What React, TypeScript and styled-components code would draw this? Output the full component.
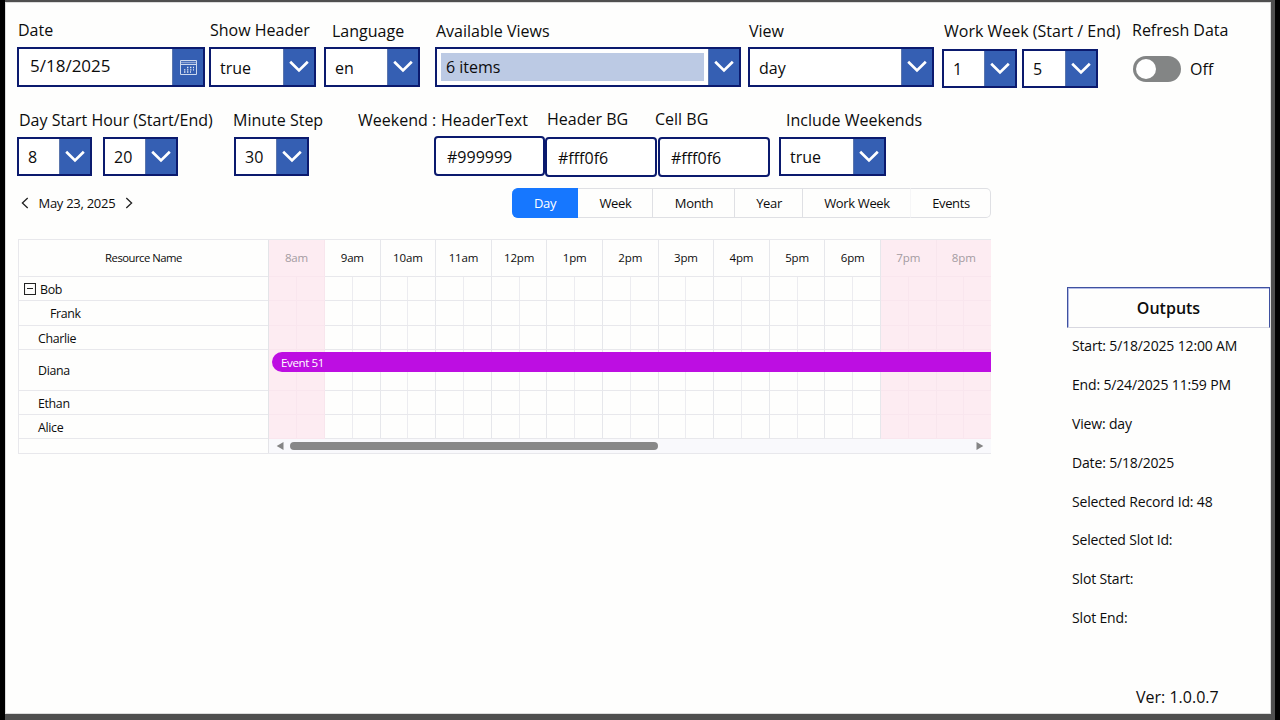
import React from "react";
import styled, { createGlobalStyle, css } from "styled-components";

const Global = createGlobalStyle`
  * { box-sizing: border-box; }
  body { margin: 0; background: #000; overflow: hidden; font-family: "Open Sans", "Noto Sans", sans-serif; color: #0c0c0c; }
`;

const Frame = styled.div`
  width: 1270px;
  height: 720px;
  margin-left: 5px;
  background: #4f4f4f;
  padding: 2px 4px 6px 0;
`;
const Page = styled.main`
  height: 712px;
  background: #fefefd;
  border: 1px solid #dcdcdc;
  display: flex;
  flex-direction: column;
`;
const FormRow = styled.section<{ $h: number; $top: number }>`
  display: flex;
  align-items: flex-start;
  height: ${(p) => p.$h}px;
  padding-top: ${(p) => p.$top}px;
  padding-left: 11px;
`;
const Field = styled.div<{ $w: number; $gap?: number }>`
  width: ${(p) => p.$w}px;
  margin-left: ${(p) => p.$gap ?? 0}px;
  flex: none;
`;
const Label = styled.label<{ $indent?: number; $drop?: number }>`
  display: block;
  height: 30px;
  line-height: 26px;
  font-size: 16px;
  white-space: nowrap;
  margin-left: ${(p) => p.$indent ?? 1}px;
  padding-top: ${(p) => p.$drop ?? 0}px;
`;
const Controls = styled.div<{ $gap?: number; $drop?: number }>`
  display: flex;
  gap: ${(p) => p.$gap ?? 0}px;
  padding-top: ${(p) => p.$drop ?? 0}px;
`;
const Box = styled.div<{ $w: number; $h?: number }>`
  display: flex;
  width: ${(p) => p.$w}px;
  height: ${(p) => p.$h ?? 40}px;
  border: 2px solid #0b1a6e;
  background: #fff;
`;
const Value = styled.span<{ $picked?: boolean; $date?: boolean }>`
  flex: 1;
  display: flex;
  align-items: center;
  padding: 1px 0 0 9px;
  font-size: 16px;
  white-space: nowrap;
  ${(p) =>
    p.$date &&
    css`
      padding: 0 0 3px 11px;
      font-size: 17px;
    `}
  ${(p) =>
    p.$picked &&
    css`
      margin: 4px 4px 4px 4px;
      padding: 0 0 0 5px;
      background: #bccae4;
    `}
`;
const DropButton = styled.span`
  width: 31px;
  flex: none;
  background: #355fb3;
  border-left: 1px solid #5b76ad;
  display: flex;
  align-items: center;
  justify-content: center;
`;
const TextBox = styled.div<{ $w: number; $h: number }>`
  width: ${(p) => p.$w}px;
  height: ${(p) => p.$h}px;
  border: 2px solid #0b1a6e;
  border-radius: 4px;
  background: #fff;
  display: flex;
  align-items: center;
  padding: 1px 0 0 11px;
  font-size: 16px;
`;
const ToggleRow = styled.div`
  display: flex;
  align-items: center;
  gap: 9px;
  height: 26px;
  margin: 9px 0 0 1px;
  font-size: 16px;
`;
const Toggle = styled.span`
  width: 48px;
  height: 26px;
  border-radius: 13px;
  background: #838585;
  padding: 3px;
  &::after {
    content: "";
    display: block;
    width: 20px;
    height: 20px;
    border-radius: 50%;
    background: #fff;
  }
`;

const Main = styled.div`
  display: flex;
  flex: 1;
  min-height: 0;
`;
const Calendar = styled.section`
  width: 973px;
  margin-left: 12px;
  flex: none;
`;
const Toolbar = styled.div`
  display: flex;
  align-items: center;
  justify-content: space-between;
  height: 30px;
`;
const DateNav = styled.div`
  display: flex;
  align-items: center;
  height: 28px;
  margin-bottom: 1px;
  padding-left: 3px;
  font-size: 13px;
  letter-spacing: -0.28px;
  gap: 9.5px;
`;
const Tabs = styled.div`
  display: flex;
  height: 30px;
`;
const Tab = styled.span<{ $w: number; $on?: boolean; $soft?: boolean }>`
  width: ${(p) => p.$w}px;
  display: flex;
  align-items: center;
  justify-content: center;
  font-size: 13px;
  letter-spacing: -0.35px;
  padding-bottom: 1px;
  padding-left: 1px;
  border: 1px solid #dfe0e4;
  border-left-width: 0;
  ${(p) => p.$soft && "border-right-color: #f6f6f7;"}
  ${(p) =>
    p.$on &&
    css`
      background: #1677ff;
      border-color: #1677ff;
      color: #fff;
    `}
  &:first-child { border-radius: 6px 0 0 6px; }
  &:last-child { border-radius: 0 5px 5px 0; }
`;
const Schedule = styled.div`
  display: flex;
  margin-top: 21px;
  height: 215px;
  border: 1px solid #e8e8ec;
  border-right: 0;
`;
const Names = styled.div`
  width: 250px;
  border-right: 1px solid #e4e4e8;
`;
const NameHead = styled.div`
  height: 37px;
  border-bottom: 1px solid #e8e8ec;
  display: flex;
  align-items: center;
  justify-content: center;
  font-size: 11.3px;
  font-weight: 500;
  letter-spacing: -0.5px;
  padding-bottom: 1px;
`;
const NameRow = styled.div<{ $h: number; $in: number }>`
  height: ${(p) => p.$h}px;
  padding-left: ${(p) => p.$in}px;
  padding-top: 1px;
  border-bottom: 1px solid #e8e8ec;
  display: flex;
  align-items: center;
  gap: 4px;
  font-size: 12.4px;
  letter-spacing: -0.35px;
`;
const Timeline = styled.div`
  flex: 1;
  min-width: 0;
`;
const SlotRow = styled.div<{ $h: number }>`
  position: relative;
  height: ${(p) => p.$h}px;
  display: grid;
  grid-template-columns: 56px repeat(11, 55.6px) minmax(0, 1fr);
`;
const Slot = styled.div<{ $off: boolean; $head?: boolean }>`
  display: flex;
  align-items: center;
  justify-content: center;
  font-size: 11.5px;
  font-weight: ${(p) => (p.$off ? 400 : 500)};
  letter-spacing: -0.15px;
  padding-bottom: ${(p) => (p.$head ? 1 : 0)}px;
  border-right: 1px solid ${(p) => (p.$off ? "#f8e6ed" : "#e6e7eb")};
  border-bottom: 1px solid ${(p) => (p.$off ? "#f9e6ee" : "#e8e8ec")};
  background: ${(p) => (p.$off ? "#fdecf2" : "transparent")};
  color: ${(p) => (p.$off ? "#a39ba1" : "#0c0c0c")};
  &:last-child { border-right: 0; }
`;
const HalfLine = styled.span<{ $off: boolean }>`
  width: 1px;
  height: 100%;
  background: ${(p) => (p.$off ? "#f9e6ee" : "#ececf0")};
`;
const EventBar = styled.div`
  position: absolute;
  left: 3px;
  right: 0;
  top: 2px;
  height: 20px;
  border-radius: 10px 0 0 10px;
  background: #bd0ee2;
  color: #fff;
  font-size: 11.6px;
  letter-spacing: -0.42px;
  line-height: 21px;
  padding-left: 9px;
`;
const Scroll = styled.div`
  height: 14px;
  background: #f9f9fc;
  display: flex;
  align-items: center;
  padding: 0 7px 1px 7px;
`;
const Thumb = styled.span`
  width: 368px;
  height: 8px;
  border-radius: 4px;
  background: #888;
  margin: 0 auto 0 6px;
`;
const Outputs = styled.aside`
  width: 204px;
  margin-left: 76px;
  margin-top: 99px;
  display: flex;
  flex-direction: column;
`;
const OutputsTitle = styled.h2`
  margin: 0;
  height: 41px;
  border: 1px solid #3f51a0;
  border-bottom-color: #d8d8e0;
  box-shadow: inset 1px 1px 0 #b4bce6;
  display: flex;
  align-items: center;
  justify-content: center;
  padding-top: 1px;
  font-size: 16px;
  font-weight: 600;
`;
const OutputLine = styled.p`
  margin: 0;
  height: 38.9px;
  line-height: 35px;
  padding-left: 5px;
  font-size: 14px;
  letter-spacing: -0.16px;
  white-space: nowrap;
`;
const Version = styled.p`
  margin: auto 0 4px;
  padding-left: 69px;
  font-size: 16px;
  line-height: 24px;
`;

const Chevron = () => (
  <svg width="20" height="14" viewBox="0 0 20 14">
    <path d="M1.2 1.8 L10 10.4 L18.8 1.8" fill="none" stroke="#fff" strokeWidth="2.7" />
  </svg>
);
const CalendarIcon = () => (
  <svg width="17" height="15" viewBox="0 0 17 15">
    <path d="M.5 .5h16v14H.5zM.5 4.5h16" fill="none" stroke="#cdd8ee" />
    <path d="M1 2.5h15" stroke="#8ba2d4" strokeWidth="1.5" />
    <path d="M7 7.5h7M4 9.8h10M4 12h7" stroke="#dfe6f4" strokeWidth="1.3" strokeDasharray="1.4 1.6" />
  </svg>
);
const Arrow = ({ next }: { next?: boolean }) => (
  <svg width="8" height="12" viewBox="0 0 8 12">
    <path d={next ? "M1.3 1 L6.6 6 L1.3 11" : "M6.7 1 L1.4 6 L6.7 11"} fill="none" stroke="#222" strokeWidth="1.3" />
  </svg>
);
const ScrollArrow = ({ next }: { next?: boolean }) => (
  <svg width="8" height="8" viewBox="0 0 8 8">
    <path d={next ? "M.5 0 L7.3 4 L.5 8z" : "M7.5 0 L.7 4 L7.5 8z"} fill="#858585" />
  </svg>
);
const Collapse = () => (
  <svg width="12" height="12" viewBox="0 0 12 12">
    <path d="M.5 .5h11v11H.5zM3 5.5h6" fill="none" stroke="#222" strokeWidth="1.1" />
  </svg>
);

type SelectProps = { w: number; h?: number; value: string; picked?: boolean };
const Select = ({ w, h, value, picked }: SelectProps) => (
  <Box $w={w} $h={h}>
    <Value $picked={picked}>{value}</Value>
    <DropButton><Chevron /></DropButton>
  </Box>
);

const hours = ["8am", "9am", "10am", "11am", "12pm", "1pm", "2pm", "3pm", "4pm", "5pm", "6pm", "7pm", "8pm"];
const isOff = (i: number) => i === 0 || i > 10;
const resources = [
  { name: "Bob", h: 24, indent: 5, group: true },
  { name: "Frank", h: 25, indent: 31 },
  { name: "Charlie", h: 24, indent: 19 },
  { name: "Diana", h: 41, indent: 19, event: "Event 51" },
  { name: "Ethan", h: 24, indent: 19 },
  { name: "Alice", h: 24, indent: 19 },
];
const tabs = [
  { name: "Day", w: 66 },
  { name: "Week", w: 75 },
  { name: "Month", w: 82 },
  { name: "Year", w: 68 },
  { name: "Work Week", w: 108 },
  { name: "Events", w: 80 },
];
const outputs = [
  "Start: 5/18/2025 12:00 AM",
  "End: 5/24/2025 11:59 PM",
  "View: day",
  "Date: 5/18/2025",
  "Selected Record Id: 48",
  "Selected Slot Id:",
  "Slot Start:",
  "Slot End:",
];

export default function App() {
  return (
    <>
      <Global />
      <Frame>
        <Page>
          <FormRow $h={90} $top={14}>
            <Field $w={188}>
              <Label>Date</Label>
              <Box $w={188}>
                <Value $date>5/18/2025</Value>
                <DropButton><CalendarIcon /></DropButton>
              </Box>
            </Field>
            <Field $w={107} $gap={4}>
              <Label>Show Header</Label>
              <Select w={107} value="true" />
            </Field>
            <Field $w={96} $gap={8}>
              <Label $indent={8} $drop={1}>Language</Label>
              <Select w={96} value="en" />
            </Field>
            <Field $w={306} $gap={15}>
              <Label $drop={1}>Available Views</Label>
              <Select w={306} value="6 items" picked />
            </Field>
            <Field $w={186} $gap={7}>
              <Label $drop={1}>View</Label>
              <Select w={186} value="day" />
            </Field>
            <Field $w={156} $gap={8}>
              <Label $indent={2} $drop={1}>Work Week (Start / End)</Label>
              <Controls $gap={5} $drop={2}>
                <Select w={75} h={39} value="1" />
                <Select w={76} h={39} value="5" />
              </Controls>
            </Field>
            <Field $w={110} $gap={34}>
              <Label $indent={0}>Refresh Data</Label>
              <ToggleRow><Toggle />Off</ToggleRow>
            </Field>
          </FormRow>
          <FormRow $h={95} $top={13}>
            <Field $w={161}>
              <Label $indent={2} $drop={1}>Day Start Hour (Start/End)</Label>
              <Controls $gap={11} $drop={1}>
                <Select w={75} h={39} value="8" />
                <Select w={75} h={39} value="20" />
              </Controls>
            </Field>
            <Field $w={75} $gap={56}>
              <Label $indent={-1} $drop={1}>Minute Step</Label>
              <Controls $drop={1}><Select w={75} h={39} value="30" /></Controls>
            </Field>
            <Field $w={76} $gap={49}>
              <Label $indent={0} $drop={1}>Weekend :</Label>
            </Field>
            <Field $w={111}>
              <Label $indent={7} $drop={1}>HeaderText</Label>
              <TextBox $w={111} $h={40}>#999999</TextBox>
            </Field>
            <Field $w={112}>
              <Label $indent={2}>Header BG</Label>
              <Controls $drop={1}><TextBox $w={112} $h={40}>#fff0f6</TextBox></Controls>
            </Field>
            <Field $w={112} $gap={1}>
              <Label $indent={-3}>Cell BG</Label>
              <Controls $drop={1}><TextBox $w={112} $h={40}>#fff0f6</TextBox></Controls>
            </Field>
            <Field $w={107} $gap={9}>
              <Label $indent={7} $drop={1}>Include Weekends</Label>
              <Controls $drop={1}><Select w={107} h={39} value="true" /></Controls>
            </Field>
          </FormRow>
          <Main>
            <Calendar>
              <Toolbar>
                <DateNav><Arrow />May 23, 2025<Arrow next /></DateNav>
                <Tabs>
                  {tabs.map((t, i) => (
                    <Tab key={t.name} $w={t.w} $on={i === 0} $soft={i === 4}>{t.name}</Tab>
                  ))}
                </Tabs>
              </Toolbar>
              <Schedule>
                <Names>
                  <NameHead>Resource Name</NameHead>
                  {resources.map((r) => (
                    <NameRow key={r.name} $h={r.h} $in={r.indent}>
                      {r.group && <Collapse />}
                      {r.name}
                    </NameRow>
                  ))}
                </Names>
                <Timeline>
                  <SlotRow $h={37}>
                    {hours.map((h, i) => <Slot key={h} $off={isOff(i)} $head>{h}</Slot>)}
                  </SlotRow>
                  {resources.map((r) => (
                    <SlotRow key={r.name} $h={r.h}>
                      {hours.map((h, i) => (
                        <Slot key={h} $off={isOff(i)}><HalfLine $off={isOff(i)} /></Slot>
                      ))}
                      {r.event && <EventBar>{r.event}</EventBar>}
                    </SlotRow>
                  ))}
                  <Scroll><ScrollArrow /><Thumb /><ScrollArrow next /></Scroll>
                </Timeline>
              </Schedule>
            </Calendar>
            <Outputs>
              <OutputsTitle>Outputs</OutputsTitle>
              {outputs.map((o) => <OutputLine key={o}>{o}</OutputLine>)}
              <Version>Ver: 1.0.0.7</Version>
            </Outputs>
          </Main>
        </Page>
      </Frame>
    </>
  );
}
